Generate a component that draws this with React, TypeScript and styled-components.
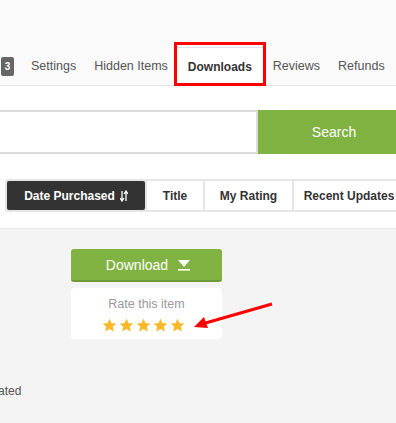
import React from 'react'
import styled, { createGlobalStyle } from 'styled-components'

const GlobalStyle = createGlobalStyle`
  html, body {
    margin: 0;
    padding: 0;
    background: #f4f4f4;
    font-family: "Liberation Sans", Arial, sans-serif;
    overflow: hidden;
  }
`

const Page = styled.div`
  width: 396px;
  min-height: 423px;
  overflow: hidden;
`

const Header = styled.div`
  height: 86px;
  background: #fafafa;
  border-bottom: 1px solid #e3e3e3;
  box-sizing: border-box;
  display: flex;
  align-items: flex-end;
  padding-left: 1px;
`

const TabRow = styled.div`
  display: flex;
  align-items: center;
  height: 39px;
  margin-bottom: -1px;
  white-space: nowrap;
`

const Badge = styled.span`
  display: inline-flex;
  align-items: center;
  justify-content: center;
  flex-shrink: 0;
  width: 13px;
  height: 19px;
  border-radius: 2px;
  background: #666;
  color: #fff;
  font-size: 10px;
  font-weight: bold;
  margin-right: 8px;
`

const Tab = styled.div<{ active?: boolean }>`
  position: relative;
  flex-shrink: 0;
  height: 39px;
  line-height: 39px;
  box-sizing: border-box;
  padding: 0 ${(p) => (p.active ? '11px' : '9px')};
  margin: 0 ${(p) => (p.active ? '1px 0 0' : '0')};
  font-size: ${(p) => (p.active ? '12px' : '12.5px')};
  font-weight: ${(p) => (p.active ? 'bold' : 'normal')};
  color: ${(p) => (p.active ? '#333' : '#555')};
  background: ${(p) => (p.active ? '#fff' : 'transparent')};
  border-top: ${(p) => (p.active ? '1px solid #dde3e8' : '0')};
`

const Highlight = styled.span`
  position: absolute;
  left: -3px;
  right: -3px;
  top: -6px;
  bottom: 0;
  border: 3px solid #f00;
  pointer-events: none;
`

const Toolbar = styled.div`
  background: #fff;
  border-bottom: 1px solid #e6e6e6;
  height: 143px;
  box-sizing: border-box;
  padding-top: 24px;
`

const SearchRow = styled.div`
  display: flex;
  margin-left: -20px;
  width: 430px;
  height: 44px;
`

const SearchInput = styled.div`
  flex: 1;
  border: 2px solid #dcdcdc;
  border-left: 0;
  background: #fff;
`

const SearchButton = styled.button`
  width: 152px;
  border: 0;
  background: #7fb241;
  color: #fff;
  font-family: inherit;
  font-size: 14px;
  padding: 0;
`

const SortGroup = styled.div`
  display: flex;
  gap: 2px;
  margin: 25px 0 0 5px;
  padding: 2px;
  background: #e6e6e6;
  border-radius: 3px;
  width: 420px;
  height: 29px;
`

const SortButton = styled.div<{ active?: boolean; w: number }>`
  display: flex;
  align-items: center;
  justify-content: center;
  gap: 5px;
  width: ${(p) => p.w}px;
  flex-shrink: 0;
  background: ${(p) => (p.active ? '#333' : '#fff')};
  color: ${(p) => (p.active ? '#fff' : '#333')};
  border-radius: ${(p) => (p.active ? '2px' : '0')};
  font-size: 12px;
  font-weight: bold;
  white-space: nowrap;
`

const Content = styled.div`
  position: relative;
  display: flex;
  padding-top: 20px;
`

const InfoColumn = styled.div`
  width: 121px;
  margin-left: -50px;
  flex-shrink: 0;
  padding-top: 135px;
  font-size: 12px;
  color: #555;
`

const ActionColumn = styled.div`
  width: 151px;
  display: flex;
  flex-direction: column;
  gap: 6px;
`

const DownloadButton = styled.div`
  height: 33px;
  box-sizing: border-box;
  background: #80b341;
  border-bottom: 2px solid #6e9a37;
  border-radius: 3px;
  color: #fff;
  font-size: 14px;
  display: flex;
  align-items: center;
  justify-content: center;
  gap: 9px;
  padding-left: 4px;
`

const RateBox = styled.div`
  height: 51px;
  background: #fff;
  border-radius: 4px;
  display: flex;
  flex-direction: column;
  align-items: center;
  padding-top: 9px;
  box-sizing: border-box;
  font-size: 12.5px;
  color: #999;
`

const Stars = styled.div`
  display: flex;
  gap: 2px;
  margin-top: 7px;
  margin-right: 6px;
`

const Annotation = styled.svg`
  position: absolute;
  left: 180px;
  top: 65px;
  overflow: visible;
`

const SortIcon = () => (
  <svg width="8" height="12" viewBox="0 0 8 12">
    <path d="M2 1v9M0 8l2 3 2-3" stroke="#fff" strokeWidth="1.3" fill="none" />
    <path d="M6 11V2M4 4l2-3 2 3" stroke="#fff" strokeWidth="1.3" fill="none" />
  </svg>
)

const DownArrow = () => (
  <svg width="14" height="12" viewBox="0 0 14 12">
    <path d="M1 1h12L7 8z" fill="#fff" />
    <rect x="1" y="10" width="12" height="1.6" fill="#fff" />
  </svg>
)

const Star = () => (
  <svg width="15" height="15" viewBox="0 0 24 24">
    <path
      d="M12 1l3.3 7.2 7.7.7-5.8 5.1 1.8 7.6L12 17.6l-7 4 1.8-7.6L1 8.9l7.7-.7z"
      fill="#fbb829"
    />
  </svg>
)

export default function App() {
  return (
    <Page>
      <GlobalStyle />
      <Header>
        <TabRow>
          <Badge>3</Badge>
          <Tab>Settings</Tab>
          <Tab>Hidden Items</Tab>
          <Tab active>
            Downloads
            <Highlight />
          </Tab>
          <Tab>Reviews</Tab>
          <Tab>Refunds</Tab>
        </TabRow>
      </Header>
      <Toolbar>
        <SearchRow>
          <SearchInput />
          <SearchButton>Search</SearchButton>
        </SearchRow>
        <SortGroup>
          <SortButton active w={138}>
            Date Purchased <SortIcon />
          </SortButton>
          <SortButton w={56}>Title</SortButton>
          <SortButton w={87}>My Rating</SortButton>
          <SortButton w={110}>Recent Updates</SortButton>
        </SortGroup>
      </Toolbar>
      <Content>
        <InfoColumn>Last Updated</InfoColumn>
        <ActionColumn>
          <DownloadButton>
            Download <DownArrow />
          </DownloadButton>
          <RateBox>
            Rate this item
            <Stars>
              <Star />
              <Star />
              <Star />
              <Star />
              <Star />
            </Stars>
          </RateBox>
        </ActionColumn>
        <Annotation width="100" height="30">
          <path d="M92 10L22 30" stroke="#f00" strokeWidth="3" />
          <path d="M14 33L24 23L28 34z" fill="#f00" />
        </Annotation>
      </Content>
    </Page>
  )
}
